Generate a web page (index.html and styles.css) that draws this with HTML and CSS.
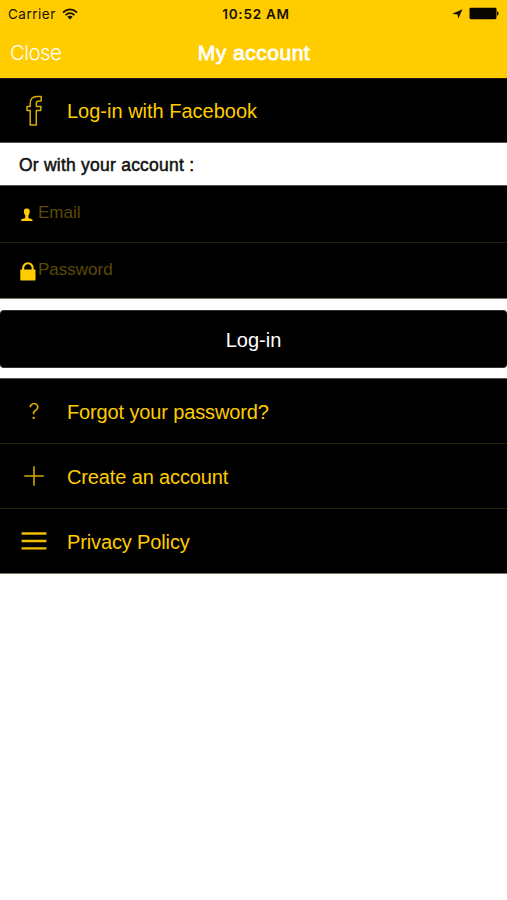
FILE: index.html
```html
<!DOCTYPE html>
<html lang="en">
<head>
<meta charset="utf-8">
<title>My account</title>
<link rel="stylesheet" href="styles.css">
</head>
<body>
<header class="top">
  <div class="status">
    <div class="side"><span class="carrier">Carrier</span>
      <svg class="wifi" width="16" height="12" viewBox="0 0 16 12" fill="none" stroke="#171200" stroke-width="1.7"><path d="M1 4.5Q8-1.8 15 4.5M3.5 7.1Q8 3.2 12.5 7.1"/><path d="M5.3 8.7Q8 6.6 10.7 8.7L8 11.5Z" fill="#171200" stroke="none"/></svg>
    </div>
    <span class="time">10:52 AM</span>
    <div class="side right">
      <svg width="11" height="10" viewBox="0 0 11 10"><path d="M10.5.2 6.4 9.6 5.5 5.5.3 4.7Z" fill="#171200"/></svg>
      <svg width="30" height="13" viewBox="0 0 30 13"><rect x=".5" y=".8" width="27" height="11.4" rx="1.4" fill="#080600"/><path d="M28 4.3Q29.6 4.8 29.6 6.5T28 8.7Z" fill="#080600"/></svg>
    </div>
  </div>
  <nav class="nav">
    <span class="close">Close</span>
    <h1 class="title">My account</h1>
    <span></span>
  </nav>
</header>
<main>
  <a class="row facebook">
    <svg class="icon" width="34" height="34" viewBox="0 0 34 34" fill="none" stroke="#d6aa08" stroke-width="1.5" stroke-linejoin="round"><path d="M13.2 31V16.6H10V12.6H13.2V9.6Q13.2 2.4 20 2.4H24.2V7.1H21.8Q19.3 7.1 19.3 9.5V12.6H24L23.6 16.6H19.3V31Z"/></svg>
    <span>Log-in with Facebook</span>
  </a>
  <h2 class="heading">Or with your account :</h2>
  <div class="fields">
    <div class="field">
      <svg width="16" height="20" viewBox="0 0 16 20" fill="#fc0"><path d="M6.8 4.6C9.4 4.6 9.9 5.9 9.7 8.1 9.6 9.8 8.9 10.6 8.4 11.4V13.8Q8.8 14.6 11 14.8 12.7 15 12.7 17H.9Q.9 15 2.6 14.8 4.8 14.6 5.2 13.8V11.4C4.7 10.6 4 9.8 3.9 8.1 3.7 5.9 4.2 4.6 6.8 4.6Z"/></svg>
      <span>Email</span>
    </div>
    <div class="field">
      <svg width="16" height="20" viewBox="0 0 16 20" fill="none"><path d="M3.1 10V7.6C3.1 .4 12.7 .4 12.7 7.6V10" stroke="#fc0" stroke-width="2.1"/><rect x=".3" y="8.6" width="15.2" height="10.8" rx=".6" fill="#fc0"/></svg>
      <span>Password</span>
    </div>
  </div>
  <div class="action"><button class="login">Log-in</button></div>
  <div class="links">
    <a class="row"><span class="icon question">?</span><span class="label">Forgot your password?</span></a>
    <a class="row"><svg class="icon" width="34" height="34" viewBox="0 0 34 34" stroke="#d6aa08" stroke-width="1.5"><path d="M7.3 17H26.7M17 7.3V26.7"/></svg><span class="label">Create an account</span></a>
    <a class="row"><svg class="icon" width="34" height="34" viewBox="0 0 34 34" stroke="#f0c000" stroke-width="2.4"><path d="M4.6 9.5H29.4M4.6 17H29.4M4.6 24.4H29.4"/></svg><span class="label">Privacy Policy</span></a>
  </div>
</main>
</body>
</html>
```
FILE: styles.css
```css
* { box-sizing: border-box; }
body { margin: 0; background: #fff; font-family: "Liberation Sans", Arial, sans-serif; }
.top { height: 78px; background: #fc0; }
.status { height: 27px; display: grid; grid-template-columns: 1fr auto 1fr; align-items: center; padding: 0 8px 0 8px; color: #171200; font-family: Inter, sans-serif; font-size: 13.5px; }
.side { display: flex; align-items: center; gap: 6px; }
.right { justify-content: flex-end; gap: 6px; }
.carrier { letter-spacing: .5px; }
.time { font-weight: 600; font-size: 13.5px; letter-spacing: .75px; padding-left: 5px; }
.nav { height: 51px; display: grid; grid-template-columns: 1fr auto 1fr; align-items: center; padding: 0 10px; color: #fff; }
.close { font-family: Inter, sans-serif; font-size: 20.5px; font-weight: 300; letter-spacing: -.6px; }
.title { margin: 0; font-size: 21px; font-weight: 400; letter-spacing: .5px; -webkit-text-stroke: .8px #fff; padding-left: 1px; }
.row { height: 65px; display: flex; align-items: center; gap: 16px; padding-left: 17px; background: #000; color: #fc0; font-size: 20px; border-bottom: 1px solid #202006; }
.facebook { height: 65px; padding-top: 2px; border-top: 1px solid #201a06; border-bottom-color: #555; }
.facebook .icon { margin-top: -2px; }
.icon { width: 34px; flex: none; }
.label { padding-top: 2px; }
.question { font-size: 22px; text-align: center; color: #e0b004; font-family: Inter, sans-serif; font-weight: 300; }
.heading { margin: 0; height: 42px; line-height: 44px; padding-left: 19px; font-size: 17.5px; font-weight: 400; letter-spacing: .23px; -webkit-text-stroke: .5px #111; color: #111; }
.fields { background: #000; border-top: 1px solid #55554a; border-bottom: 1px solid #77775a; }
.field { height: 56px; display: flex; align-items: center; padding-left: 20px; gap: 2px; color: #5c4a05; font-size: 17px; }
.field span { padding-bottom: 2px; }
.field + .field { border-top: 1px solid #202006; }
.action { padding: 11px 0; }
.login { display: block; width: 100%; height: 58px; margin-bottom: -1px; padding: 2px 0 0; border: 1px solid #333; border-width: 1px 0; border-radius: 4px; background: #000; color: #fff; font: 20px "Liberation Sans", sans-serif; }
.links { border-top: 1px solid #55554a; letter-spacing: -.13px; }
.links .row:last-child { border-bottom-color: #77775a; }
```
